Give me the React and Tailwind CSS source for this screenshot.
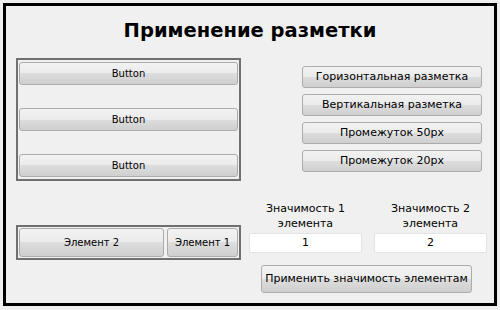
export default function App() {
  const btn =
    "flex items-center justify-center rounded-[3px] border border-[#acacac] bg-[linear-gradient(#f2f2f2_0%,#ebebeb_50%,#dddddd_50%,#cfcfcf_100%)] text-black";
  return (
    <div className="w-[500px] h-[310px] bg-[#f0f0f0] pt-[3px] pl-[3px]" style={{ fontFamily: "'DejaVu Sans', sans-serif" }}>
      <div className="w-[494px] h-[303px] border-[3px] border-black bg-[#f0f0f0] relative flex flex-col">
        <div className="h-[49px] flex justify-center pt-[15px]">
          <span className="text-[19.5px] font-bold leading-none">Применение разметки</span>
        </div>
        <div className="flex mt-[3px]">
          <div className="ml-[10px] flex flex-col">
            <div className="w-[225px] h-[123px] border-2 border-[#707070] p-px flex flex-col justify-between py-[2px]">
              <div className={btn + " h-[23px] text-[10px]"}>Button</div>
              <div className={btn + " h-[23px] text-[10px]"}>Button</div>
              <div className={btn + " h-[23px] text-[10px]"}>Button</div>
            </div>
            <div className="mt-[44px] w-[225px] h-[35px] border-2 border-[#707070] p-px flex gap-[3px]">
              <div className={btn + " w-[145px] text-[10px]"}>Элемент 2</div>
              <div className={btn + " flex-1 text-[10px]"}>Элемент 1</div>
            </div>
          </div>
          <div className="ml-[8px] flex flex-col">
            <div className="ml-[53px] mt-[8px] flex flex-col gap-[6px]">
              <div className={btn + " w-[180px] h-[22px] text-[11px]"}>Горизонтальная разметка</div>
              <div className={btn + " w-[180px] h-[22px] text-[11px]"}>Вертикальная разметка</div>
              <div className={btn + " w-[180px] h-[22px] text-[11px]"}>Промежуток 50px</div>
              <div className={btn + " w-[180px] h-[22px] text-[11px]"}>Промежуток 20px</div>
            </div>
            <div className="mt-[29px] flex gap-[12px]">
              <div className="w-[113px] flex flex-col items-center">
                <div className="text-[11px] leading-[15px] text-center">Значимость 1<br />элемента</div>
                <div className="mt-[2px] w-[113px] h-[20px] bg-white border border-[#e3e3e3] rounded-[2px] flex items-center justify-center text-[11px]">1</div>
              </div>
              <div className="w-[113px] flex flex-col items-center">
                <div className="text-[11px] leading-[15px] text-center">Значимость 2<br />элемента</div>
                <div className="mt-[2px] w-[113px] h-[20px] bg-white border border-[#e3e3e3] rounded-[2px] flex items-center justify-center text-[11px]">2</div>
              </div>
            </div>
            <div className={btn + " mt-[12px] ml-[12px] w-[211px] h-[28px] text-[11px] border-[#8a8a8a]"}>Применить значимость элементам</div>
          </div>
        </div>
      </div>
    </div>
  );
}
